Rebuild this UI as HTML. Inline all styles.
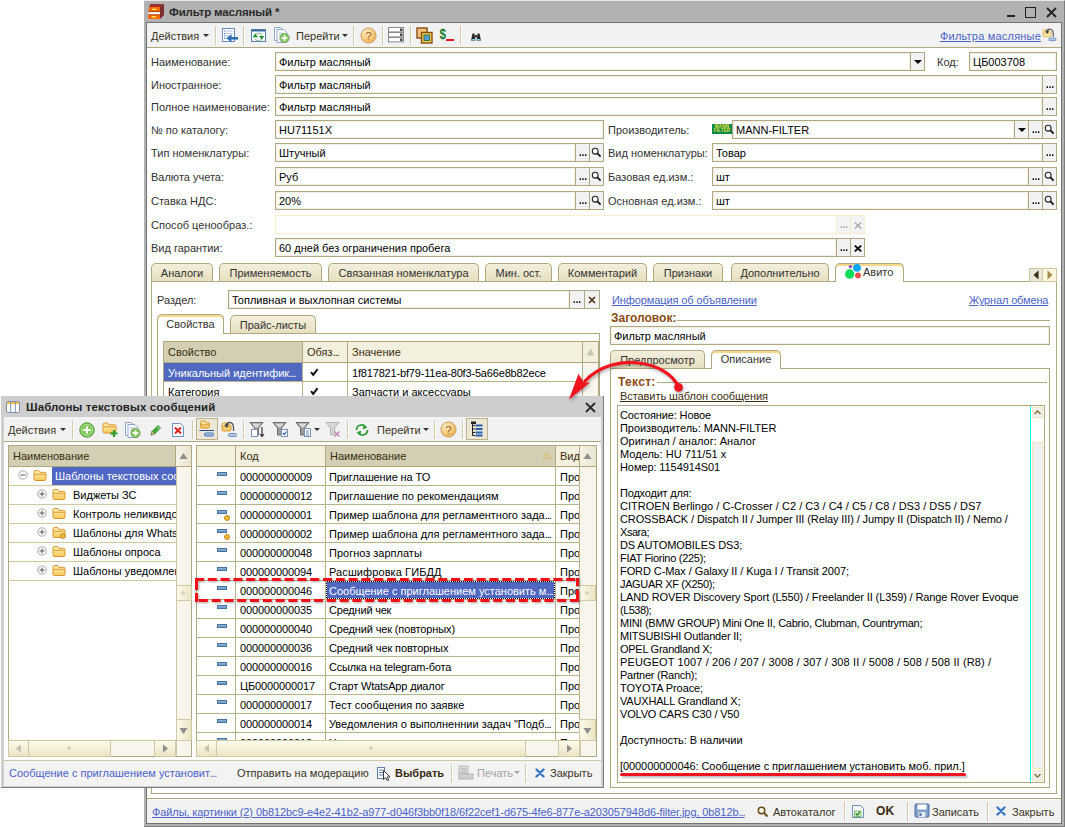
<!DOCTYPE html><html><head><meta charset="utf-8"><title>Фильтр масляный</title><style>
html,body{margin:0;padding:0}
body{width:1065px;height:827px;position:relative;overflow:hidden;background:#fff;font:11px "Liberation Sans",sans-serif;color:#222}
div,span,a{position:absolute;box-sizing:border-box;white-space:nowrap}
.t{line-height:13px;height:13px}
.in{background:#fff;border:1px solid #b0a882;height:19px;box-shadow:inset 0 0 0 1px #f4f1e4}
.in .t{left:3px;top:3px;color:#000}
.bt{background:#f2f2f2;border:1px solid #b0a882;height:19px;width:15px;text-align:center;line-height:14px;font-size:11px;color:#000}
.lnk{color:#4a62c8;text-decoration:underline}
.tab{height:18px;border:1px solid #b0a882;border-bottom:none;border-radius:5px 5px 0 0;background:linear-gradient(#f3efdc,#e6dfc0);text-align:center;line-height:19px;color:#333}
.tab.act{background:#fff;height:19px;box-shadow:inset 0 2px 0 #f7d98b;line-height:17px}
.hd{background:#f3f0de;border-right:1px solid #b0a882;border-bottom:1px solid #b0a882;height:21px;line-height:21px;padding-left:4px;color:#3a2d10;overflow:hidden}
.hd.cur{background:#d3ceb4}
.cell{background:#fff;border-right:1px solid #b9b28e;border-bottom:1px solid #b9b28e;height:19px;line-height:20px;padding-left:4px;color:#000;overflow:hidden}
.sel{background:#5068c0;color:#fff}
i{font-style:normal;letter-spacing:-1px}
.sep{width:1px;background:#d2ccae;box-shadow:1px 0 0 #fff}
</style></head><body>
<div class="" style="left:144px;top:0px;width:921px;height:827px;background:#b2b2b2;border-top:1px solid #e8e8e8;border-right:1px solid #7c7c7c;border-bottom:1px solid #7c7c7c"></div>
<div class="" style="left:146px;top:22px;width:916px;height:802px;background:#fff;border:1px solid #727272"></div>
<span class="t " style="left:169px;top:6px;font-weight:bold;color:#2a2a2a;font-size:11.5px;letter-spacing:-.15px">Фильтр масляный *</span>
<svg style="position:absolute;left:148px;top:4px" width="16" height="15" viewBox="0 0 16 15"><path d="M2.5 0H16L12 3H1Z" fill="#9c2f2a"/><path d="M16 0V11L12 15V3Z" fill="#7a2b2b"/><path d="M1 3H12V15H0Z" fill="#ff6a00"/><path d="M.6 8H12V10.5H.3Z" fill="#fff"/><path d="M.6 7.6H12M.3 10.8H12" stroke="#8a2b1a" stroke-width=".7"/><rect x="4" y="4.5" width="4.5" height="1.4" rx=".7" fill="#ffe45a"/><rect x="3.5" y="12" width="4.5" height="1.4" rx=".7" fill="#ffe45a"/></svg>
<div class="" style="left:1007px;top:15px;width:8px;height:2px;background:#222"></div>
<div class="" style="left:1025px;top:7px;width:11px;height:11px;border:1.5px solid #222"></div>
<svg style="position:absolute;left:1046px;top:7px" width="11" height="11" viewBox="0 0 11 11"><path d="M1 1L10 10M10 1L1 10" stroke="#222" stroke-width="1.8"/></svg>
<div class="" style="left:147px;top:23px;width:914px;height:25px;background:#f2f2f2;border-bottom:1px solid #b0a77f"></div>
<span class="t " style="left:151px;top:30px;color:#3a3426">Действия</span>
<svg style="position:absolute;left:203px;top:34px" width="6" height="3"><path d="M0 0H6L3 3Z" fill="#333"/></svg>
<div class="sep" style="left:215px;top:26px;width:1px;height:19px;"></div>
<span class="t " style="left:296px;top:30px;color:#3a3426">Перейти</span>
<svg style="position:absolute;left:342px;top:34px" width="6" height="3"><path d="M0 0H6L3 3Z" fill="#333"/></svg>
<div class="sep" style="left:243px;top:26px;width:1px;height:19px;"></div>
<div class="sep" style="left:353px;top:26px;width:1px;height:19px;"></div>
<div class="sep" style="left:382px;top:26px;width:1px;height:19px;"></div>
<div class="sep" style="left:410px;top:26px;width:1px;height:19px;"></div>
<div class="sep" style="left:460px;top:26px;width:1px;height:19px;"></div>
<svg style="position:absolute;left:222px;top:28px" width="17" height="15" viewBox="0 0 17 15"><rect x=".5" y=".5" width="12" height="13" fill="#fff" stroke="#6a8cc0" stroke-width="1"/><path d="M2 3.0H3.5" stroke="#3a6fd0" stroke-width="1"/><path d="M4.5 3.0H10.5" stroke="#b5bcc8" stroke-width="1"/><path d="M2 5.4H3.5" stroke="#3a6fd0" stroke-width="1"/><path d="M4.5 5.4H10.5" stroke="#b5bcc8" stroke-width="1"/><path d="M2 7.8H3.5" stroke="#3a6fd0" stroke-width="1"/><path d="M4.5 7.8H10.5" stroke="#b5bcc8" stroke-width="1"/><path d="M2 10.2H3.5" stroke="#3a6fd0" stroke-width="1"/><path d="M4.5 10.2H10.5" stroke="#b5bcc8" stroke-width="1"/><path d="M16 10.3H8" stroke="#2f6fb5" stroke-width="2.6"/><path d="M9.5 6.3V14.3L4.2 10.3Z" fill="#2f6fb5"/></svg>
<svg style="position:absolute;left:251px;top:29px" width="15" height="13" viewBox="0 0 15 13"><rect x=".5" y=".5" width="14" height="12" fill="#f2fbfd" stroke="#5f7fa8" stroke-width="1"/><rect x=".5" y=".5" width="14" height="2" fill="#3f6f9f"/><path d="M3.8 8A3.7 3.4 0 0 1 11 6.5M11.2 8A3.7 3.4 0 0 1 4 9.5" fill="none" stroke="#7fb08a" stroke-width=".9"/><path d="M1.8 8.2L4.3 4.6L6.8 8.2Z" fill="#1f8a2a"/><path d="M8 7L10.6 10.6L13.2 7Z" fill="#1f8a2a"/></svg>
<svg style="position:absolute;left:274px;top:27px" width="17" height="17" viewBox="0 0 17 17"><path d="M0.5 0.5H6.5L9.5 3.5V13.5H0.5Z" fill="#fff" stroke="#8fa6cc" stroke-width="1"/><path d="M3 2.5H10L13 5.5V15.5H3Z" fill="#fff" stroke="#8fa6cc" stroke-width="1"/><path d="M5 6H9" stroke="#b5bcc8" stroke-width="1"/><path d="M5 8H9" stroke="#b5bcc8" stroke-width="1"/><circle cx="10.5" cy="11" r="4.7" fill="#7cc653" stroke="#8aa88a" stroke-width="1"/><path d="M10.5 8.2V13.8M7.7 11H13.3" stroke="#fff" stroke-width="1.8"/></svg>
<svg style="position:absolute;left:360px;top:27px" width="17" height="17" viewBox="0 0 17 17"><defs><radialGradient id="hg" cx=".35" cy=".3" r=".8"><stop offset="0" stop-color="#fdebc4"/><stop offset=".6" stop-color="#f6c878"/><stop offset="1" stop-color="#e8a44a"/></radialGradient></defs><circle cx="8.5" cy="8.5" r="7.6" fill="url(#hg)" stroke="#c9a06a" stroke-width="1"/><text x="8.5" y="12.5" text-anchor="middle" font-family="Liberation Sans, sans-serif" font-size="11.5" fill="#9a5a1e">?</text></svg>
<svg style="position:absolute;left:388px;top:27px" width="17" height="16" viewBox="0 0 17 16"><rect x=".5" y="0.5" width="15" height="4.4" fill="#fbfbfb" stroke="#8a8a8a" stroke-width="1"/><rect x="12" y="1.5" width="2.5" height="2.5" fill="#444"/><rect x=".5" y="5.5" width="15" height="4.4" fill="#fbfbfb" stroke="#8a8a8a" stroke-width="1"/><rect x="12" y="6.5" width="2.5" height="2.5" fill="#444"/><rect x=".5" y="10.5" width="15" height="4.4" fill="#fbfbfb" stroke="#8a8a8a" stroke-width="1"/><rect x="12" y="11.5" width="2.5" height="2.5" fill="#444"/></svg>
<svg style="position:absolute;left:416px;top:27px" width="17" height="17" viewBox="0 0 17 17"><rect x="1" y="1" width="10" height="10" fill="#f0c27a" stroke="#8a4b12" stroke-width="1.4"/><rect x="5.5" y="5.5" width="10.5" height="10.5" fill="#f2d14a" stroke="#8a4b12" stroke-width="1.4"/><rect x="8" y="8" width="5.5" height="5.5" fill="#5aa0d8" stroke="#2f7a4a" stroke-width="1"/></svg>
<svg style="position:absolute;left:438px;top:27px" width="18" height="17" viewBox="0 0 18 17"><text x="1.5" y="12" font-family="Liberation Sans, sans-serif" font-size="14" font-weight="bold" fill="#0f7a2a" textLength="6.5" lengthAdjust="spacingAndGlyphs">$</text><rect x="8" y="12" width="8" height="2" fill="#ee1520"/></svg>
<svg style="position:absolute;left:470px;top:32px" width="12" height="10" viewBox="0 0 12 10"><path d="M2.5 1.5H4.5V4L5.5 8.5H1L2 4Z" fill="#222"/><path d="M7.5 1.5H9.5L10 4L11 8.5H6.5L7.5 4Z" fill="#222"/><rect x="4.5" y="3" width="3" height="2.5" fill="#333"/><path d="M1.5 7.5H5M7 7.5H10.5" stroke="#6fd0e8" stroke-width="1"/></svg>
<svg style="position:absolute;left:1042px;top:27px" width="15" height="15" viewBox="0 0 16.5 17"><defs><linearGradient id="fg" x1="0" y1="0" x2="0" y2="1"><stop offset="0" stop-color="#fdeeb4"/><stop offset="1" stop-color="#f6c95c"/></linearGradient></defs><path d="M1 4.5Q1 3 2.5 3H5.5L7 4.8H8.5Q10 4.8 10 6.3V9.5Q10 11 8.5 11H2.5Q1 11 1 9.5Z" fill="#fbe9a8" stroke="#d9b45c" stroke-width="1"/><path d="M1.5 6.8H9.5" stroke="#d9b45c" stroke-width=".9"/><path d="M5 5.5C6 1.5 12 1 12.5 7V11" fill="none" stroke="#555" stroke-width="1.3"/><path d="M3 5L7.5 3.5L6.5 8Z" fill="#444"/><rect x="7.5" y="12.5" width="8" height="3" rx="1" fill="#b7c9e2" stroke="#6f8fbf" stroke-width="1"/></svg>
<span class="t lnk" style="left:940px;top:30px;letter-spacing:.2px">Фильтра масляные</span>
<span class="t " style="left:151px;top:56px;color:#333">Наименование:</span>
<span class="t " style="left:151px;top:79px;color:#333">Иностранное:</span>
<span class="t " style="left:151px;top:101px;color:#333">Полное наименование:</span>
<span class="t " style="left:151px;top:124px;color:#333">№ по каталогу:</span>
<span class="t " style="left:151px;top:147px;color:#333">Тип номенклатуры:</span>
<span class="t " style="left:151px;top:171px;color:#333">Валюта учета:</span>
<span class="t " style="left:151px;top:195px;color:#333">Ставка НДС:</span>
<span class="t " style="left:151px;top:219px;color:#333">Способ ценообраз.:</span>
<span class="t " style="left:151px;top:242px;color:#333">Вид гарантии:</span>
<div class="in" style="left:275px;top:52px;width:636px;"><span class="t">Фильтр масляный</span></div>
<div class="bt" style="left:910px;top:52px;width:15px;"><svg width="8" height="4" viewBox="0 0 8 4" style="position:absolute;left:3px;top:7px"><path d="M0 0H8L4 4Z" fill="#000"/></svg></div>
<span class="t " style="left:937px;top:56px;color:#333">Код:</span>
<div class="in" style="left:969px;top:52px;width:88px;"><span class="t">ЦБ003708</span></div>
<div class="in" style="left:275px;top:75px;width:768px;"><span class="t">Фильтр масляный</span></div>
<div class="bt" style="left:1042px;top:75px;width:15px;"><svg width="9" height="3" viewBox="0 0 9 3" style="position:absolute;left:2.5px;top:10px"><path d="M.6 .3H2V2H.6ZM3.3 .3H4.7V2H3.3ZM6 .3H7.4V2H6Z" fill="#111"/></svg></div>
<div class="in" style="left:275px;top:97px;width:768px;"><span class="t">Фильтр масляный</span></div>
<div class="bt" style="left:1042px;top:97px;width:15px;"><svg width="9" height="3" viewBox="0 0 9 3" style="position:absolute;left:2.5px;top:10px"><path d="M.6 .3H2V2H.6ZM3.3 .3H4.7V2H3.3ZM6 .3H7.4V2H6Z" fill="#111"/></svg></div>
<div class="in" style="left:275px;top:120px;width:329px;"><span class="t">HU71151X</span></div>
<span class="t " style="left:608px;top:124px;color:#333">Производитель:</span>
<div class="" style="left:712px;top:124px;width:20px;height:10px;background:#0f8a4a;color:#e6e23a;font-size:4.5px;line-height:4.5px;font-weight:bold;text-align:center;overflow:hidden;padding-top:.5px;letter-spacing:.2px">MANN<br>FILTER</div>
<div class="in" style="left:732px;top:120px;width:283px;"><span class="t">MANN-FILTER</span></div>
<div class="bt" style="left:1014px;top:120px;width:15px;"><svg width="8" height="4" viewBox="0 0 8 4" style="position:absolute;left:3px;top:7px"><path d="M0 0H8L4 4Z" fill="#000"/></svg></div>
<div class="bt" style="left:1028px;top:120px;width:15px;"><svg width="9" height="3" viewBox="0 0 9 3" style="position:absolute;left:2.5px;top:10px"><path d="M.6 .3H2V2H.6ZM3.3 .3H4.7V2H3.3ZM6 .3H7.4V2H6Z" fill="#111"/></svg></div>
<div class="bt" style="left:1042px;top:120px;width:15px;"><svg width="11" height="11" viewBox="0 0 11 11" style="position:absolute;left:1px;top:3px"><circle cx="4.2" cy="4.2" r="2.9" fill="#fff" stroke="#222" stroke-width="1.1"/><path d="M6.4 6.4 L9.6 9.6" stroke="#111" stroke-width="1.8"/></svg></div>
<div class="in" style="left:275px;top:143px;width:301px;"><span class="t">Штучный</span></div>
<div class="bt" style="left:575px;top:143px;width:15px;"><svg width="9" height="3" viewBox="0 0 9 3" style="position:absolute;left:2.5px;top:10px"><path d="M.6 .3H2V2H.6ZM3.3 .3H4.7V2H3.3ZM6 .3H7.4V2H6Z" fill="#111"/></svg></div>
<div class="bt" style="left:589px;top:143px;width:15px;"><svg width="11" height="11" viewBox="0 0 11 11" style="position:absolute;left:1px;top:3px"><circle cx="4.2" cy="4.2" r="2.9" fill="#fff" stroke="#222" stroke-width="1.1"/><path d="M6.4 6.4 L9.6 9.6" stroke="#111" stroke-width="1.8"/></svg></div>
<span class="t " style="left:608px;top:147px;color:#333">Вид номенклатуры:</span>
<div class="in" style="left:712px;top:143px;width:331px;"><span class="t">Товар</span></div>
<div class="bt" style="left:1042px;top:143px;width:15px;"><svg width="9" height="3" viewBox="0 0 9 3" style="position:absolute;left:2.5px;top:10px"><path d="M.6 .3H2V2H.6ZM3.3 .3H4.7V2H3.3ZM6 .3H7.4V2H6Z" fill="#111"/></svg></div>
<div class="in" style="left:275px;top:167px;width:301px;"><span class="t">Руб</span></div>
<div class="bt" style="left:575px;top:167px;width:15px;"><svg width="9" height="3" viewBox="0 0 9 3" style="position:absolute;left:2.5px;top:10px"><path d="M.6 .3H2V2H.6ZM3.3 .3H4.7V2H3.3ZM6 .3H7.4V2H6Z" fill="#111"/></svg></div>
<div class="bt" style="left:589px;top:167px;width:15px;"><svg width="11" height="11" viewBox="0 0 11 11" style="position:absolute;left:1px;top:3px"><circle cx="4.2" cy="4.2" r="2.9" fill="#fff" stroke="#222" stroke-width="1.1"/><path d="M6.4 6.4 L9.6 9.6" stroke="#111" stroke-width="1.8"/></svg></div>
<span class="t " style="left:608px;top:171px;color:#333">Базовая ед.изм.:</span>
<div class="in" style="left:712px;top:167px;width:317px;"><span class="t">шт</span></div>
<div class="bt" style="left:1028px;top:167px;width:15px;"><svg width="9" height="3" viewBox="0 0 9 3" style="position:absolute;left:2.5px;top:10px"><path d="M.6 .3H2V2H.6ZM3.3 .3H4.7V2H3.3ZM6 .3H7.4V2H6Z" fill="#111"/></svg></div>
<div class="bt" style="left:1042px;top:167px;width:15px;"><svg width="11" height="11" viewBox="0 0 11 11" style="position:absolute;left:1px;top:3px"><circle cx="4.2" cy="4.2" r="2.9" fill="#fff" stroke="#222" stroke-width="1.1"/><path d="M6.4 6.4 L9.6 9.6" stroke="#111" stroke-width="1.8"/></svg></div>
<div class="in" style="left:275px;top:191px;width:301px;"><span class="t">20%</span></div>
<div class="bt" style="left:575px;top:191px;width:15px;"><svg width="9" height="3" viewBox="0 0 9 3" style="position:absolute;left:2.5px;top:10px"><path d="M.6 .3H2V2H.6ZM3.3 .3H4.7V2H3.3ZM6 .3H7.4V2H6Z" fill="#111"/></svg></div>
<div class="bt" style="left:589px;top:191px;width:15px;"><svg width="11" height="11" viewBox="0 0 11 11" style="position:absolute;left:1px;top:3px"><circle cx="4.2" cy="4.2" r="2.9" fill="#fff" stroke="#222" stroke-width="1.1"/><path d="M6.4 6.4 L9.6 9.6" stroke="#111" stroke-width="1.8"/></svg></div>
<span class="t " style="left:608px;top:195px;color:#333">Основная ед.изм.:</span>
<div class="in" style="left:712px;top:191px;width:317px;"><span class="t">шт</span></div>
<div class="bt" style="left:1028px;top:191px;width:15px;"><svg width="9" height="3" viewBox="0 0 9 3" style="position:absolute;left:2.5px;top:10px"><path d="M.6 .3H2V2H.6ZM3.3 .3H4.7V2H3.3ZM6 .3H7.4V2H6Z" fill="#111"/></svg></div>
<div class="bt" style="left:1042px;top:191px;width:15px;"><svg width="11" height="11" viewBox="0 0 11 11" style="position:absolute;left:1px;top:3px"><circle cx="4.2" cy="4.2" r="2.9" fill="#fff" stroke="#222" stroke-width="1.1"/><path d="M6.4 6.4 L9.6 9.6" stroke="#111" stroke-width="1.8"/></svg></div>
<div class="in" style="left:275px;top:215px;width:562px;border-color:#f7f0d0;box-shadow:none"><span class="t"></span></div>
<div class="bt" style="left:836px;top:215px;width:15px;border-color:#f7f0d0;background:#f3f3f3"><svg width="9" height="3" viewBox="0 0 9 3" style="position:absolute;left:2.5px;top:10px"><path d="M.6 .3H2V2H.6ZM3.3 .3H4.7V2H3.3ZM6 .3H7.4V2H6Z" fill="#aaa"/></svg></div>
<div class="bt" style="left:850px;top:215px;width:15px;border-color:#f7f0d0;background:#f3f3f3"><svg width="8" height="7" viewBox="0 0 8 7" style="position:absolute;left:3px;top:6px"><path d="M.8 .6L7.2 6.4M7.2 .6L.8 6.4" stroke="#a8a8a8" stroke-width="1.4"/></svg></div>
<div class="in" style="left:275px;top:238px;width:562px;"><span class="t">60 дней без ограничения пробега</span></div>
<div class="bt" style="left:836px;top:238px;width:15px;"><svg width="9" height="3" viewBox="0 0 9 3" style="position:absolute;left:2.5px;top:10px"><path d="M.6 .3H2V2H.6ZM3.3 .3H4.7V2H3.3ZM6 .3H7.4V2H6Z" fill="#111"/></svg></div>
<div class="bt" style="left:850px;top:238px;width:15px;"><svg width="8" height="7" viewBox="0 0 8 7" style="position:absolute;left:3px;top:6px"><path d="M.8 .6L7.2 6.4M7.2 .6L.8 6.4" stroke="#111" stroke-width="1.9"/></svg></div>
<div class="" style="left:151px;top:281px;width:906px;height:513px;border:1px solid #b0a882;background:#fff"></div>
<div class="tab" style="left:151px;top:263px;width:62px">Аналоги</div>
<div class="tab" style="left:219px;top:263px;width:103px">Применяемость</div>
<div class="tab" style="left:328px;top:263px;width:151px">Связанная номенклатура</div>
<div class="tab" style="left:485px;top:263px;width:67px">Мин. ост.</div>
<div class="tab" style="left:558px;top:263px;width:89px">Комментарий</div>
<div class="tab" style="left:653px;top:263px;width:70px">Признаки</div>
<div class="tab" style="left:731px;top:263px;width:98px">Дополнительно</div>
<div class="tab act" style="left:835px;top:263px;width:69px;padding-left:27px;text-align:left">Авито</div>
<svg style="position:absolute;left:844px;top:263px" width="18" height="17" viewBox="0 0 18 17"><circle cx="6.4" cy="3.6" r="1.7" fill="#9b45c4"/><circle cx="13" cy="4.8" r="3.9" fill="#0aa7ff"/><circle cx="5.7" cy="11" r="4.7" fill="#0adb5b"/><circle cx="14" cy="12.4" r="2.9" fill="#f14b4b"/></svg>
<div class="" style="left:1029px;top:268px;width:14px;height:14px;border:1px solid #cfc8a6;background:#e9e6da"><svg width="12" height="12" style="position:absolute;left:0;top:0"><path d="M8.5 1.5V10.5L3.5 6Z" fill="#3a2a10"/></svg></div>
<div class="" style="left:1042px;top:268px;width:15px;height:14px;border:1px solid #cfc8a6;background:#fbf7dc"><svg width="12" height="12" style="position:absolute;left:1px;top:0"><path d="M3.5 1.5V10.5L8.5 6Z" fill="#a48a4f"/></svg></div>
<span class="t " style="left:157px;top:294px;color:#333">Раздел:</span>
<div class="in" style="left:228px;top:290px;width:342px;"><span class="t">Топливная и выхлопная системы</span></div>
<div class="bt" style="left:569px;top:290px;width:16px;"><svg width="9" height="3" viewBox="0 0 9 3" style="position:absolute;left:2.5px;top:10px"><path d="M.6 .3H2V2H.6ZM3.3 .3H4.7V2H3.3ZM6 .3H7.4V2H6Z" fill="#111"/></svg></div>
<div class="bt" style="left:584px;top:290px;width:16px;"><svg width="8" height="8" viewBox="0 0 8 8" style="position:absolute;left:3px;top:5px"><path d="M1 1L7 7M7 1L1 7" stroke="#4a3312" stroke-width="1.7"/></svg></div>
<div class="" style="left:157px;top:333px;width:443px;height:450px;border:1px solid #b0a882;background:#fff"></div>
<div class="tab act" style="left:157px;top:314px;width:67px;height:20px;line-height:19px">Свойства</div>
<div class="tab" style="left:230px;top:315px;width:86px">Прайс-листы</div>
<div class="" style="left:163px;top:341px;width:436px;height:400px;border:1px solid #b0a882;background:#fff"></div>
<div class="hd cur" style="left:164px;top:342px;width:139px">Свойство</div>
<div class="hd" style="left:303px;top:342px;width:45px">Обяз<i>...</i></div>
<div class="hd" style="left:348px;top:342px;width:235px">Значение</div>
<div class="hd" style="left:583px;top:342px;width:15px;padding:0;border-right:none"><svg width="9" height="8" viewBox="0 0 9 8" style="position:absolute;left:3px;top:6px"><path d="M0.5 7.5H8.5L4.5 0.5Z" fill="#c9c6b4"/></svg></div>
<div class="cell sel" style="left:164px;top:363px;width:139px">Уникальный идентифик<i>...</i></div>
<div class="cell" style="left:303px;top:363px;width:45px;padding-left:6px"><svg width="9" height="9" viewBox="0 0 9 9" style="position:absolute;left:7px;top:5px"><path d="M1 4.2L3.2 6.8L7.6 1.2" fill="none" stroke="#111" stroke-width="2"/></svg></div>
<div class="cell" style="left:348px;top:363px;width:235px;letter-spacing:-.17px">1f817821-bf79-11ea-80f3-5a66e8b82ece</div>
<div class="cell" style="left:164px;top:382px;width:139px">Категория</div>
<div class="cell" style="left:303px;top:382px;width:45px;padding-left:6px"><svg width="9" height="9" viewBox="0 0 9 9" style="position:absolute;left:7px;top:5px"><path d="M1 4.2L3.2 6.8L7.6 1.2" fill="none" stroke="#111" stroke-width="2"/></svg></div>
<div class="cell" style="left:348px;top:382px;width:235px">Запчасти и аксессуары</div>
<div class="" style="left:583px;top:363px;width:15px;height:378px;background:#f8f6ec"></div>
<span class="t lnk" style="left:612px;top:294px;letter-spacing:-.1px">Информация об объявлении</span>
<span class="t lnk" style="left:969px;top:294px;letter-spacing:-.15px">Журнал обмена</span>
<span class="t " style="left:611px;top:312px;font-weight:bold;color:#8a4b12;font-size:12px">Заголовок:</span>
<div class="" style="left:677px;top:320px;width:373px;height:1px;background:#b0a882"></div>
<div class="in" style="left:610px;top:326px;width:440px;"><span class="t">Фильтр масляный</span></div>
<div class="" style="left:610px;top:368px;width:440px;height:420px;border:1px solid #b0a882;background:#fff"></div>
<div class="tab" style="left:610px;top:350px;width:95px">Предпросмотр</div>
<div class="tab act" style="left:711px;top:350px;width:70px">Описание</div>
<span class="t " style="left:618px;top:376px;font-weight:bold;color:#8a4b12;font-size:12px;letter-spacing:.3px">Текст:</span>
<div class="" style="left:657px;top:382px;width:390px;height:1px;background:#b0a882"></div>
<span class="t " style="left:620px;top:390px;color:#3a2d10;text-decoration:underline;letter-spacing:-.07px">Вставить шаблон сообщения</span>
<div class="" style="left:617px;top:405px;width:428px;height:378px;border:1px solid #b0a882;background:#fff"></div>
<span class="t " style="left:620px;top:409px;color:#000;letter-spacing:-0.127px">Состояние: Новое</span>
<span class="t " style="left:620px;top:422px;color:#000;letter-spacing:-0.048px">Производитель: MANN-FILTER</span>
<span class="t " style="left:620px;top:435px;color:#000;letter-spacing:-0.004px">Оригинал / аналог: Аналог</span>
<span class="t " style="left:620px;top:448px;color:#000;letter-spacing:0.017px">Модель: HU 711/51 x</span>
<span class="t " style="left:620px;top:461px;color:#000;letter-spacing:-0.087px">Номер: 1154914S01</span>
<span class="t " style="left:620px;top:487px;color:#000;letter-spacing:-0.200px">Подходит для:</span>
<span class="t " style="left:620px;top:500px;color:#000;letter-spacing:0.020px">CITROEN Berlingo / C-Crosser / C2 / C3 / C4 / C5 / C8 / DS3 / DS5 / DS7</span>
<span class="t " style="left:620px;top:513px;color:#000;letter-spacing:-0.110px">CROSSBACK / Dispatch II / Jumper III (Relay III) / Jumpy II (Dispatch II) / Nemo /</span>
<span class="t " style="left:620px;top:526px;color:#000;letter-spacing:-0.460px">Xsara;</span>
<span class="t " style="left:620px;top:539px;color:#000;letter-spacing:-0.128px">DS AUTOMOBILES DS3;</span>
<span class="t " style="left:620px;top:552px;color:#000;letter-spacing:-0.289px">FIAT Fiorino (225);</span>
<span class="t " style="left:620px;top:565px;color:#000;letter-spacing:-0.085px">FORD C-Max / Galaxy II / Kuga I / Transit 2007;</span>
<span class="t " style="left:620px;top:578px;color:#000;letter-spacing:-0.356px">JAGUAR XF (X250);</span>
<span class="t " style="left:620px;top:591px;color:#000;letter-spacing:-0.121px">LAND ROVER Discovery Sport (L550) / Freelander II (L359) / Range Rover Evoque</span>
<span class="t " style="left:620px;top:604px;color:#000;letter-spacing:-0.533px">(L538);</span>
<span class="t " style="left:620px;top:617px;color:#000;letter-spacing:-0.270px">MINI (BMW GROUP) Mini One II, Cabrio, Clubman, Countryman;</span>
<span class="t " style="left:620px;top:630px;color:#000;letter-spacing:-0.196px">MITSUBISHI Outlander II;</span>
<span class="t " style="left:620px;top:643px;color:#000;letter-spacing:-0.275px">OPEL Grandland X;</span>
<span class="t " style="left:620px;top:656px;color:#000;letter-spacing:0.116px">PEUGEOT 1007 / 206 / 207 / 3008 / 307 / 308 II / 5008 / 508 / 508 II (R8) /</span>
<span class="t " style="left:620px;top:669px;color:#000;letter-spacing:-0.267px">Partner (Ranch);</span>
<span class="t " style="left:620px;top:682px;color:#000;letter-spacing:-0.115px">TOYOTA Proace;</span>
<span class="t " style="left:620px;top:695px;color:#000;letter-spacing:-0.180px">VAUXHALL Grandland X;</span>
<span class="t " style="left:620px;top:708px;color:#000;letter-spacing:-0.174px">VOLVO CARS C30 / V50</span>
<span class="t " style="left:620px;top:734px;color:#000;letter-spacing:-0.048px">Доступность: В наличии</span>
<span class="t " style="left:620px;top:760px;color:#000;letter-spacing:-0.074px">[000000000046: Сообщение с приглашением установить моб. прил.]</span>
<div class="" style="left:620px;top:773px;width:346px;height:3px;background:#ee1520;border-radius:1.5px;box-shadow:2px 2px 2px rgba(0,0,0,.25)"></div>
<div class="" style="left:1030px;top:406px;width:14px;height:376px;background:#fff;border-left:1px solid #0ff"></div>
<div class="" style="left:1032px;top:407px;width:11px;height:11px;background:#f0f0f3;border:1px solid #efe6c0"><svg width="9" height="9" style="position:absolute;left:0;top:0" viewBox="0 0 9 9"><path d="M1.5 6L4.5 3L7.5 6" fill="none" stroke="#8a7a45" stroke-width="1.6"/></svg></div>
<div class="" style="left:1032px;top:770px;width:11px;height:11px;background:#f0f0f3;border:1px solid #efe6c0"><svg width="9" height="9" style="position:absolute;left:0;top:0" viewBox="0 0 9 9"><path d="M1.5 3L4.5 6L7.5 3" fill="none" stroke="#8a7a45" stroke-width="1.6"/></svg></div>
<div class="" style="left:1032px;top:442px;width:11px;height:327px;background:#f0f0f3;border:1px solid #efe6c0"></div>
<div class="" style="left:147px;top:798px;width:914px;height:25px;background:#f2f2f2;border-top:1px solid #b0a77f;box-shadow:inset 0 1px 0 #fafafa"></div>
<span class="t lnk" style="left:152px;top:806px;letter-spacing:-.1px">Файлы, картинки (2) 0b812bc9-e4e2-41b2-a977-d046f3bb0f18/6f22cef1-d675-4fe6-877e-a203057948d6-filter.jpg, 0b812b<i>...</i></span>
<svg style="position:absolute;left:757px;top:806px" width="12" height="12" viewBox="0 0 12 12"><circle cx="4.5" cy="4.5" r="3.2" fill="#fff" stroke="#6b4a1a" stroke-width="1.5"/><path d="M7 7L10.5 10.5" stroke="#6b4a1a" stroke-width="2"/></svg>
<span class="t " style="left:773px;top:806px;color:#3a3426">Автокаталог</span>
<div class="sep" style="left:844px;top:802px;width:1px;height:19px;"></div>
<svg style="position:absolute;left:851px;top:804px" width="14" height="15" viewBox="0 0 14 15"><path d="M1.5 1.5H9.5L12.5 4.5V13.5H1.5Z" fill="#fff" stroke="#6f8fbf" stroke-width="1"/><rect x="3.5" y="7" width="6.5" height="5.5" fill="#d8f0d0" stroke="#5fae4a" stroke-width=".8"/><path d="M4.8 9.5L6.3 11.2L9 7.8" fill="none" stroke="#2f8a2a" stroke-width="1.4"/></svg>
<span class="t " style="left:876px;top:805px;font-weight:bold;font-size:12px;color:#3a2a10;letter-spacing:.2px">OK</span>
<div class="sep" style="left:907px;top:802px;width:1px;height:19px;"></div>
<svg style="position:absolute;left:914px;top:803px" width="16" height="15" viewBox="0 0 16 15"><rect x="1" y="1" width="14" height="13" rx="1" fill="#7f9fc8" stroke="#4d6f9f" stroke-width="1"/><rect x="3.5" y="1.5" width="9" height="5" fill="#fff"/><rect x="4.5" y="9" width="7" height="5" fill="#e6ecf5"/><rect x="5.5" y="10" width="2" height="3" fill="#4d6f9f"/></svg>
<span class="t " style="left:932px;top:806px;color:#3a3426">Записать</span>
<div class="sep" style="left:987px;top:802px;width:1px;height:19px;"></div>
<svg style="position:absolute;left:996px;top:806px" width="10" height="10" viewBox="0 0 10 10"><path d="M1.5 1.5L8.5 8.5M8.5 1.5L1.5 8.5" stroke="#3a78c2" stroke-width="2.4" stroke-linecap="round"/></svg>
<span class="t " style="left:1012px;top:806px;color:#3a3426">Закрыть</span>
<div class="" style="left:1px;top:396px;width:603px;height:392px;background:#cecece;border-right:1px solid #7d7d7d;border-bottom:1px solid #7d7d7d"></div>
<div class="" style="left:4px;top:417px;width:597px;height:369px;background:#fff"></div>
<span class="t " style="left:26px;top:401px;font-weight:bold;color:#222;font-size:11.5px;letter-spacing:.1px">Шаблоны текстовых сообщений</span>
<svg style="position:absolute;left:6px;top:401px" width="14" height="12" viewBox="0 0 14 12"><rect x=".5" y=".5" width="13" height="11" rx="1" fill="#fff" stroke="#7d8fae" stroke-width="1"/><rect x="1" y="1" width="12" height="2.2" fill="#f5c84a"/><path d="M4.7 .5V11.5M9.3 .5V11.5" stroke="#7d8fae" stroke-width="1"/></svg>
<svg style="position:absolute;left:585px;top:402px" width="11" height="11" viewBox="0 0 11 11"><path d="M1 1L10 10M10 1L1 10" stroke="#2a2a2a" stroke-width="1.8"/></svg>
<div class="" style="left:4px;top:417px;width:597px;height:25px;background:#f2f2f2;border-bottom:1px solid #b0a77f"></div>
<span class="t " style="left:8px;top:424px;color:#3a3426">Действия</span>
<svg style="position:absolute;left:60px;top:428px" width="6" height="3"><path d="M0 0H6L3 3Z" fill="#333"/></svg>
<div class="sep" style="left:72px;top:420px;width:1px;height:19px;"></div>
<svg style="position:absolute;left:79px;top:422px" width="16" height="16" viewBox="0 0 16 16"><circle cx="8" cy="8" r="7.2" fill="#7cc653" stroke="#4e9a36" stroke-width="1"/><circle cx="8" cy="8" r="5.6" fill="none" stroke="#b4e39a" stroke-width="1"/><path d="M8 4.2V11.8M4.2 8H11.8" stroke="#fff" stroke-width="2.2"/></svg>
<svg style="position:absolute;left:102px;top:422px" width="17" height="16" viewBox="0 0 17 16"><defs><linearGradient id="fg" x1="0" y1="0" x2="0" y2="1"><stop offset="0" stop-color="#fdeeb4"/><stop offset="1" stop-color="#f6c95c"/></linearGradient></defs><path d="M1 2.5Q1 1 2.5 1H5.5L7 2.8H12.5Q14 2.8 14 4.3V9.5Q14 11 12.5 11H2.5Q1 11 1 9.5Z" fill="url(#fg)" stroke="#d9952b" stroke-width="1"/><path d="M1.5 4.8H13.5" stroke="#d9952b" stroke-width=".9"/><path d="M12 8V15M8.5 11.5H15.5" stroke="#2f9a2f" stroke-width="2.2"/></svg>
<svg style="position:absolute;left:125px;top:422px" width="17" height="17" viewBox="0 0 17 17"><path d="M0.5 0.5H6.5L9.5 3.5V13.5H0.5Z" fill="#fff" stroke="#8fa6cc" stroke-width="1"/><path d="M3 2.5H10L13 5.5V15.5H3Z" fill="#fff" stroke="#8fa6cc" stroke-width="1"/><path d="M5 6H9" stroke="#b5bcc8" stroke-width="1"/><path d="M5 8H9" stroke="#b5bcc8" stroke-width="1"/><circle cx="10.5" cy="11" r="4.7" fill="#7cc653" stroke="#8aa88a" stroke-width="1"/><path d="M10.5 8.2V13.8M7.7 11H13.3" stroke="#fff" stroke-width="1.8"/></svg>
<svg style="position:absolute;left:149px;top:423px" width="13" height="14" viewBox="0 0 13 14"><path d="M2 12L3 8.5L9 2.5L11.5 5L5.5 11Z" fill="#3faa3a" stroke="#2b7d2a" stroke-width=".8"/><path d="M2 12L3 8.5L5.5 11Z" fill="#f4e6c0" stroke="#6b5a2a" stroke-width=".5"/><path d="M8 3.5L10.5 6" stroke="#c9f0b8" stroke-width="1"/></svg>
<svg style="position:absolute;left:171px;top:422px" width="14" height="16" viewBox="0 0 14 16"><path d="M1.5 1.5H9.5L12.5 4.5V14.5H1.5Z" fill="#fff" stroke="#6f8fbf" stroke-width="1"/><path d="M4 5.5L10 11.5M10 5.5L4 11.5" stroke="#e02020" stroke-width="2"/></svg>
<div class="sep" style="left:192px;top:420px;width:1px;height:19px;"></div>
<div style="left:196px;top:418px;width:22px;height:22px;background:#ece7d6;border:1px solid #bdb38a"></div><svg style="position:absolute;left:199px;top:420px" width="16" height="18" viewBox="0 0 16 18"><defs><linearGradient id="fg" x1="0" y1="0" x2="0" y2="1"><stop offset="0" stop-color="#fdeeb4"/><stop offset="1" stop-color="#f6c95c"/></linearGradient></defs><path d="M1.5 2.5Q1.5 1 3.0 1H6.0L7.5 2.8H9.0Q10.5 2.8 10.5 4.3V6.5Q10.5 8 9.0 8H3.0Q1.5 8 1.5 6.5Z" fill="url(#fg)" stroke="#d9952b" stroke-width="1"/><path d="M2.0 4.8H10.0" stroke="#d9952b" stroke-width=".9"/><path d="M.5 10.5H15" stroke="#2a4f8f" stroke-width="1"/><rect x="5.5" y="13" width="9" height="3" rx="1" fill="#9fc0e6" stroke="#4d79b3" stroke-width="1"/></svg>
<svg style="position:absolute;left:221px;top:420px" width="16" height="18" viewBox="0 0 16 18"><defs><linearGradient id="fg" x1="0" y1="0" x2="0" y2="1"><stop offset="0" stop-color="#fdeeb4"/><stop offset="1" stop-color="#f6c95c"/></linearGradient></defs><path d="M1 4.5Q1 3 2.5 3H5.5L7 4.8H8.5Q10 4.8 10 6.3V9.5Q10 11 8.5 11H2.5Q1 11 1 9.5Z" fill="url(#fg)" stroke="#d9952b" stroke-width="1"/><path d="M1.5 6.8H9.5" stroke="#d9952b" stroke-width=".9"/><path d="M5 5.5C6 1.5 12 1 12.5 7V11" fill="none" stroke="#555" stroke-width="1.3"/><path d="M3 5L7.5 3.5L6.5 8Z" fill="#444"/><rect x="7.5" y="13.5" width="8" height="3" rx="1" fill="#b7c9e2" stroke="#6f8fbf" stroke-width="1"/></svg>
<div class="sep" style="left:243px;top:420px;width:1px;height:19px;"></div>
<svg style="position:absolute;left:249px;top:421px" width="18" height="17" viewBox="0 0 18 17"><path d="M1 1.5H14L9.5 7V14H5.5V7Z" fill="#9b9b9b" stroke="#6e6e6e" stroke-width="1"/><path d="M3 2.5H12L8.5 6.5H6.5Z" fill="#d9d9d9"/><rect x="2.5" y="8.5" width="6" height="7" fill="#fff" stroke="#7d93b3" stroke-width="1"/><path d="M13 6V15M11 13L13 15.5L15 13" fill="none" stroke="#333" stroke-width="1.2"/></svg>
<svg style="position:absolute;left:272px;top:421px" width="18" height="17" viewBox="0 0 18 17"><path d="M1 1.5H14L9.5 7V14H5.5V7Z" fill="#9b9b9b" stroke="#6e6e6e" stroke-width="1"/><path d="M3 2.5H12L8.5 6.5H6.5Z" fill="#d9d9d9"/><rect x="9.5" y="8.5" width="6" height="7" fill="#fff" stroke="#7d93b3" stroke-width="1"/><path d="M11 12L12.3 13.5L14.5 10.5" fill="none" stroke="#2a5db0" stroke-width="1.2"/></svg>
<svg style="position:absolute;left:295px;top:421px" width="18" height="17" viewBox="0 0 18 17"><path d="M1 1.5H14L9.5 7V14H5.5V7Z" fill="#9b9b9b" stroke="#6e6e6e" stroke-width="1"/><path d="M3 2.5H12L8.5 6.5H6.5Z" fill="#d9d9d9"/><rect x="9.5" y="7.5" width="6" height="8" fill="#fff" stroke="#7d93b3" stroke-width="1"/><path d="M11 10H14" stroke="#6f8fbf" stroke-width="1"/><path d="M11 12H14" stroke="#6f8fbf" stroke-width="1"/><path d="M11 14H14" stroke="#6f8fbf" stroke-width="1"/></svg>
<svg style="position:absolute;left:314px;top:428px" width="6" height="3"><path d="M0 0H6L3 3Z" fill="#333"/></svg>
<svg style="position:absolute;left:325px;top:421px" width="18" height="17" viewBox="0 0 18 17"><path d="M1 1.5H14L9.5 7V14H5.5V7Z" fill="#d4d4d4" stroke="#b5b5b5" stroke-width="1"/><path d="M3 2.5H12L8.5 6.5H6.5Z" fill="#d9d9d9"/><path d="M9.5 10.5L14.5 15.5M14.5 10.5L9.5 15.5" stroke="#c58ab8" stroke-width="1.6"/></svg>
<div class="sep" style="left:347px;top:420px;width:1px;height:19px;"></div>
<svg style="position:absolute;left:354px;top:423px" width="16" height="14" viewBox="0 0 16 14"><path d="M2.5 7A5 5 0 0 1 11.5 4" fill="none" stroke="#2f9a3a" stroke-width="1.8"/><path d="M9.5 1.5L13.5 4.5L9 6.5Z" fill="#2f9a3a"/><path d="M13.5 7A5 5 0 0 1 4.5 10" fill="none" stroke="#2f9a3a" stroke-width="1.8"/><path d="M6.5 12.5L2.5 9.5L7 7.5Z" fill="#2f9a3a"/></svg>
<span class="t " style="left:377px;top:424px;color:#3a3426">Перейти</span>
<svg style="position:absolute;left:423px;top:428px" width="6" height="3"><path d="M0 0H6L3 3Z" fill="#333"/></svg>
<div class="sep" style="left:434px;top:420px;width:1px;height:19px;"></div>
<svg style="position:absolute;left:440px;top:421px" width="17" height="17" viewBox="0 0 17 17"><defs><radialGradient id="hg" cx=".35" cy=".3" r=".8"><stop offset="0" stop-color="#fdebc4"/><stop offset=".6" stop-color="#f6c878"/><stop offset="1" stop-color="#e8a44a"/></radialGradient></defs><circle cx="8.5" cy="8.5" r="7.6" fill="url(#hg)" stroke="#c9a06a" stroke-width="1"/><text x="8.5" y="12.5" text-anchor="middle" font-family="Liberation Sans, sans-serif" font-size="11.5" fill="#9a5a1e">?</text></svg>
<div class="sep" style="left:462px;top:420px;width:1px;height:19px;"></div>
<div style="left:466px;top:418px;width:22px;height:22px;background:#ece7d6;border:1px solid #bdb38a"></div><svg style="position:absolute;left:470px;top:421px" width="14" height="16" viewBox="0 0 14 16"><path d="M2.5 1V14.5M2.5 4.5H5M2.5 8H5M2.5 11.5H5M2.5 14.5H5" stroke="#222" stroke-width="1" fill="none"/><rect x="1" y="0.5" width="5" height="2.5" fill="#222"/><rect x="5.5" y="3.5" width="7" height="2" fill="#2a5db0"/><rect x="5.5" y="7" width="7" height="2" fill="#2a5db0"/><rect x="5.5" y="10.5" width="7" height="2" fill="#2a5db0"/><rect x="5.5" y="13.5" width="7" height="2" fill="#2a5db0"/></svg>
<div class="" style="left:8px;top:445px;width:184px;height:312px;border:1px solid #b0a882;background:#fff"></div>
<div class="hd cur" style="left:9px;top:446px;width:167px;height:21px;line-height:21px">Наименование</div>
<div class="hd" style="left:176px;top:446px;width:15px;height:21px;padding:0;border-right:none;background:linear-gradient(90deg,#f6f3e6,#e9e5d0)"></div>
<svg style="position:absolute;left:179px;top:452px" width="9" height="8"><path d="M0.5 7H8.5L4.5 1Z" fill="#8e8e8e"/></svg>
<div class="" style="left:9px;top:467px;width:167px;height:19px;border-bottom:1px solid #cfc8a6;background:#fff"></div>
<div class="" style="left:52px;top:467px;width:124px;height:18px;background:#4f66c3;overflow:hidden"><span class="t" style="left:3px;top:3px;color:#fff">Шаблоны текстовых сообщений</span></div>
<svg style="position:absolute;left:33px;top:470px" width="15" height="12" viewBox="0 0 15 12"><defs><linearGradient id="fg" x1="0" y1="0" x2="0" y2="1"><stop offset="0" stop-color="#fdeeb4"/><stop offset="1" stop-color="#f6c95c"/></linearGradient></defs><path d="M1 2.0Q1 0.5 2.5 0.5H5.5L7 2.3H11.5Q13 2.3 13 3.8V9.0Q13 10.5 11.5 10.5H2.5Q1 10.5 1 9.0Z" fill="url(#fg)" stroke="#d9952b" stroke-width="1"/><path d="M1.5 4.3H12.5" stroke="#d9952b" stroke-width=".9"/></svg>
<svg style="position:absolute;left:17.5px;top:470px" width="10" height="10" viewBox="0 0 10 10"><circle cx="5" cy="5" r="4.2" fill="#fff" stroke="#a0a0a0" stroke-width="0.9"/><path d="M2.5 5H7.5" stroke="#555" stroke-width="1"/></svg>
<div class="" style="left:9px;top:486px;width:167px;height:19px;border-bottom:1px solid #cfc8a6;background:#fff"></div>
<div class="" style="left:71px;top:486px;width:105px;height:18px;overflow:hidden"><span class="t" style="left:2px;top:3px;color:#000">Виджеты ЗС</span></div>
<svg style="position:absolute;left:52px;top:489px" width="15" height="12" viewBox="0 0 15 12"><defs><linearGradient id="fg" x1="0" y1="0" x2="0" y2="1"><stop offset="0" stop-color="#fdeeb4"/><stop offset="1" stop-color="#f6c95c"/></linearGradient></defs><path d="M1 2.0Q1 0.5 2.5 0.5H5.5L7 2.3H11.5Q13 2.3 13 3.8V9.0Q13 10.5 11.5 10.5H2.5Q1 10.5 1 9.0Z" fill="url(#fg)" stroke="#d9952b" stroke-width="1"/><path d="M1.5 4.3H12.5" stroke="#d9952b" stroke-width=".9"/></svg>
<svg style="position:absolute;left:36.5px;top:489px" width="10" height="10" viewBox="0 0 10 10"><circle cx="5" cy="5" r="4.2" fill="#fff" stroke="#a0a0a0" stroke-width="0.9"/><path d="M2.5 5H7.5" stroke="#555" stroke-width="1"/><path d="M5 2.5V7.5" stroke="#555" stroke-width="1"/></svg>
<div class="" style="left:9px;top:505px;width:167px;height:19px;border-bottom:1px solid #cfc8a6;background:#fff"></div>
<div class="" style="left:71px;top:505px;width:105px;height:18px;overflow:hidden"><span class="t" style="left:2px;top:3px;color:#000">Контроль неликвидов</span></div>
<svg style="position:absolute;left:52px;top:508px" width="15" height="12" viewBox="0 0 15 12"><defs><linearGradient id="fg" x1="0" y1="0" x2="0" y2="1"><stop offset="0" stop-color="#fdeeb4"/><stop offset="1" stop-color="#f6c95c"/></linearGradient></defs><path d="M1 2.0Q1 0.5 2.5 0.5H5.5L7 2.3H11.5Q13 2.3 13 3.8V9.0Q13 10.5 11.5 10.5H2.5Q1 10.5 1 9.0Z" fill="url(#fg)" stroke="#d9952b" stroke-width="1"/><path d="M1.5 4.3H12.5" stroke="#d9952b" stroke-width=".9"/></svg>
<svg style="position:absolute;left:36.5px;top:508px" width="10" height="10" viewBox="0 0 10 10"><circle cx="5" cy="5" r="4.2" fill="#fff" stroke="#a0a0a0" stroke-width="0.9"/><path d="M2.5 5H7.5" stroke="#555" stroke-width="1"/><path d="M5 2.5V7.5" stroke="#555" stroke-width="1"/></svg>
<div class="" style="left:9px;top:524px;width:167px;height:19px;border-bottom:1px solid #cfc8a6;background:#fff"></div>
<div class="" style="left:71px;top:524px;width:105px;height:18px;overflow:hidden"><span class="t" style="left:2px;top:3px;color:#000">Шаблоны для WhatsApp</span></div>
<svg style="position:absolute;left:52px;top:527px" width="15" height="12" viewBox="0 0 15 12"><defs><linearGradient id="fg" x1="0" y1="0" x2="0" y2="1"><stop offset="0" stop-color="#fdeeb4"/><stop offset="1" stop-color="#f6c95c"/></linearGradient></defs><path d="M1 2.0Q1 0.5 2.5 0.5H5.5L7 2.3H11.5Q13 2.3 13 3.8V9.0Q13 10.5 11.5 10.5H2.5Q1 10.5 1 9.0Z" fill="url(#fg)" stroke="#d9952b" stroke-width="1"/><path d="M1.5 4.3H12.5" stroke="#d9952b" stroke-width=".9"/></svg>
<svg style="position:absolute;left:60px;top:533px" width="6" height="6" viewBox="0 0 6 6"><circle cx="3" cy="3" r="2.4" fill="#f5c13a" stroke="#a87a1a" stroke-width=".8"/></svg>
<svg style="position:absolute;left:36.5px;top:527px" width="10" height="10" viewBox="0 0 10 10"><circle cx="5" cy="5" r="4.2" fill="#fff" stroke="#a0a0a0" stroke-width="0.9"/><path d="M2.5 5H7.5" stroke="#555" stroke-width="1"/><path d="M5 2.5V7.5" stroke="#555" stroke-width="1"/></svg>
<div class="" style="left:9px;top:543px;width:167px;height:19px;border-bottom:1px solid #cfc8a6;background:#fff"></div>
<div class="" style="left:71px;top:543px;width:105px;height:18px;overflow:hidden"><span class="t" style="left:2px;top:3px;color:#000">Шаблоны опроса</span></div>
<svg style="position:absolute;left:52px;top:546px" width="15" height="12" viewBox="0 0 15 12"><defs><linearGradient id="fg" x1="0" y1="0" x2="0" y2="1"><stop offset="0" stop-color="#fdeeb4"/><stop offset="1" stop-color="#f6c95c"/></linearGradient></defs><path d="M1 2.0Q1 0.5 2.5 0.5H5.5L7 2.3H11.5Q13 2.3 13 3.8V9.0Q13 10.5 11.5 10.5H2.5Q1 10.5 1 9.0Z" fill="url(#fg)" stroke="#d9952b" stroke-width="1"/><path d="M1.5 4.3H12.5" stroke="#d9952b" stroke-width=".9"/></svg>
<svg style="position:absolute;left:36.5px;top:546px" width="10" height="10" viewBox="0 0 10 10"><circle cx="5" cy="5" r="4.2" fill="#fff" stroke="#a0a0a0" stroke-width="0.9"/><path d="M2.5 5H7.5" stroke="#555" stroke-width="1"/><path d="M5 2.5V7.5" stroke="#555" stroke-width="1"/></svg>
<div class="" style="left:9px;top:562px;width:167px;height:19px;border-bottom:1px solid #cfc8a6;background:#fff"></div>
<div class="" style="left:71px;top:562px;width:105px;height:18px;overflow:hidden"><span class="t" style="left:2px;top:3px;color:#000">Шаблоны уведомлений</span></div>
<svg style="position:absolute;left:52px;top:565px" width="15" height="12" viewBox="0 0 15 12"><defs><linearGradient id="fg" x1="0" y1="0" x2="0" y2="1"><stop offset="0" stop-color="#fdeeb4"/><stop offset="1" stop-color="#f6c95c"/></linearGradient></defs><path d="M1 2.0Q1 0.5 2.5 0.5H5.5L7 2.3H11.5Q13 2.3 13 3.8V9.0Q13 10.5 11.5 10.5H2.5Q1 10.5 1 9.0Z" fill="url(#fg)" stroke="#d9952b" stroke-width="1"/><path d="M1.5 4.3H12.5" stroke="#d9952b" stroke-width=".9"/></svg>
<svg style="position:absolute;left:36.5px;top:565px" width="10" height="10" viewBox="0 0 10 10"><circle cx="5" cy="5" r="4.2" fill="#fff" stroke="#a0a0a0" stroke-width="0.9"/><path d="M2.5 5H7.5" stroke="#555" stroke-width="1"/><path d="M5 2.5V7.5" stroke="#555" stroke-width="1"/></svg>
<div class="" style="left:176px;top:467px;width:15px;height:273px;background:#f8f6ec;border-left:1px solid #cfc8a6"></div>
<div class="" style="left:176px;top:585px;width:16px;height:16px;background:linear-gradient(90deg,#fcfaec,#ebe5c4);border:1px solid #cfc8a6"></div>
<svg style="position:absolute;left:181px;top:591px" width="4" height="4" viewBox="0 0 4 4"><circle cx="2" cy="2" r="1.3" fill="none" stroke="#bdb89c" stroke-width=".8"/></svg>
<div class="" style="left:176px;top:719px;width:16px;height:22px;background:linear-gradient(90deg,#fcfaec,#ebe5c4);border:1px solid #cfc8a6"></div>
<svg style="position:absolute;left:179px;top:727px" width="9" height="8"><path d="M0.5 1H8.5L4.5 7Z" fill="#8e8e8e"/></svg>
<div class="" style="left:9px;top:740px;width:167px;height:16px;background:#f8f6ec;border-top:1px solid #cfc8a6"></div>
<div class="" style="left:8px;top:740px;width:21px;height:17px;background:linear-gradient(#fcfaec,#ebe5c4);border:1px solid #cfc8a6"></div>
<svg style="position:absolute;left:15px;top:744px" width="7" height="9"><path d="M6 0.5V8.5L1 4.5Z" fill="#c4c1ae"/></svg>
<div class="" style="left:28px;top:740px;width:83px;height:17px;background:linear-gradient(#fcfaec,#ebe5c4);border:1px solid #cfc8a6"></div>
<svg style="position:absolute;left:67px;top:746px" width="4" height="4" viewBox="0 0 4 4"><circle cx="2" cy="2" r="1.3" fill="none" stroke="#bdb89c" stroke-width=".8"/></svg>
<div class="" style="left:154px;top:740px;width:22px;height:17px;background:linear-gradient(#fcfaec,#ebe5c4);border:1px solid #cfc8a6"></div>
<svg style="position:absolute;left:162px;top:744px" width="7" height="9"><path d="M1 0.5V8.5L6 4.5Z" fill="#8e8e8e"/></svg>
<div class="" style="left:176px;top:741px;width:15px;height:15px;background:#f8f6ec;border-left:1px solid #cfc8a6"></div>
<div class="" style="left:196px;top:445px;width:401px;height:312px;border:1px solid #b0a882;background:#fff"></div>
<div class="hd" style="left:197px;top:446px;width:39px;height:21px;line-height:21px;"></div>
<div class="hd" style="left:236px;top:446px;width:90px;height:21px;line-height:21px;">Код</div>
<div class="hd cur" style="left:326px;top:446px;width:230px;height:21px;line-height:21px;padding-left:4px">Наименование</div>
<svg style="position:absolute;left:541px;top:452px" width="11" height="8" viewBox="0 0 11 8"><path d="M4 1H7M2.5 3.5H8.5M1 6H10" stroke="#d9c27a" stroke-width="1.6"/></svg>
<div class="hd" style="left:556px;top:446px;width:24px;height:21px;line-height:21px;padding-left:4px">Вид</div>
<div class="hd" style="left:580px;top:446px;width:16px;height:21px;line-height:21px;padding:0;border-right:none;background:linear-gradient(90deg,#f6f3e6,#e9e5d0)"></div>
<svg style="position:absolute;left:583px;top:452px" width="9" height="8"><path d="M0.5 7H8.5L4.5 1Z" fill="#8e8e8e"/></svg>
<div class="cell" style="left:197px;top:467px;width:39px;"><span style="left:20px;top:5px;width:10px;height:4px;background:linear-gradient(#8fb6da,#6a98c4);border:1px solid #44739f"></span></div>
<div class="cell" style="left:236px;top:467px;width:90px;letter-spacing:-.12px">000000000009</div>
<div class="cell" style="left:326px;top:467px;width:230px;letter-spacing:-0.10px;padding-left:3px">Приглашение на ТО</div>
<div class="cell" style="left:556px;top:467px;width:24px;">Про</div>
<div class="cell" style="left:197px;top:486px;width:39px;"><span style="left:20px;top:5px;width:10px;height:4px;background:linear-gradient(#8fb6da,#6a98c4);border:1px solid #44739f"></span></div>
<div class="cell" style="left:236px;top:486px;width:90px;letter-spacing:-.12px">000000000012</div>
<div class="cell" style="left:326px;top:486px;width:230px;padding-left:3px">Приглашение по рекомендациям</div>
<div class="cell" style="left:556px;top:486px;width:24px;">Про</div>
<div class="cell" style="left:197px;top:505px;width:39px;"><span style="left:20px;top:5px;width:10px;height:4px;background:linear-gradient(#8fb6da,#6a98c4);border:1px solid #44739f"></span><span style="left:27px;top:10px;width:6px;height:6px;border-radius:3px;background:#f2b830;border:1px solid #c08a20"></span></div>
<div class="cell" style="left:236px;top:505px;width:90px;letter-spacing:-.12px">000000000001</div>
<div class="cell" style="left:326px;top:505px;width:230px;padding-left:3px">Пример шаблона для регламентного зада<i>...</i></div>
<div class="cell" style="left:556px;top:505px;width:24px;">Про</div>
<div class="cell" style="left:197px;top:524px;width:39px;"><span style="left:20px;top:5px;width:10px;height:4px;background:linear-gradient(#8fb6da,#6a98c4);border:1px solid #44739f"></span><span style="left:27px;top:10px;width:6px;height:6px;border-radius:3px;background:#f2b830;border:1px solid #c08a20"></span></div>
<div class="cell" style="left:236px;top:524px;width:90px;letter-spacing:-.12px">000000000002</div>
<div class="cell" style="left:326px;top:524px;width:230px;padding-left:3px">Пример шаблона для регламентного зада<i>...</i></div>
<div class="cell" style="left:556px;top:524px;width:24px;">Про</div>
<div class="cell" style="left:197px;top:543px;width:39px;"><span style="left:20px;top:5px;width:10px;height:4px;background:linear-gradient(#8fb6da,#6a98c4);border:1px solid #44739f"></span></div>
<div class="cell" style="left:236px;top:543px;width:90px;letter-spacing:-.12px">000000000048</div>
<div class="cell" style="left:326px;top:543px;width:230px;padding-left:3px">Прогноз зарплаты</div>
<div class="cell" style="left:556px;top:543px;width:24px;">Про</div>
<div class="cell" style="left:197px;top:562px;width:39px;"><span style="left:20px;top:5px;width:10px;height:4px;background:linear-gradient(#8fb6da,#6a98c4);border:1px solid #44739f"></span></div>
<div class="cell" style="left:236px;top:562px;width:90px;letter-spacing:-.12px">000000000094</div>
<div class="cell" style="left:326px;top:562px;width:230px;letter-spacing:0.10px;padding-left:3px">Расшифровка ГИБДД</div>
<div class="cell" style="left:556px;top:562px;width:24px;">Про</div>
<div class="cell" style="left:197px;top:581px;width:39px;"><span style="left:20px;top:5px;width:10px;height:4px;background:linear-gradient(#8fb6da,#6a98c4);border:1px solid #44739f"></span></div>
<div class="cell" style="left:236px;top:581px;width:90px;letter-spacing:-.12px">000000000046</div>
<div class="cell sel" style="left:326px;top:581px;width:230px;padding-left:3px">Сообщение с приглашением установить м<i>...</i></div>
<div class="cell" style="left:556px;top:581px;width:24px;">Про</div>
<div class="cell" style="left:197px;top:600px;width:39px;"><span style="left:20px;top:5px;width:10px;height:4px;background:linear-gradient(#8fb6da,#6a98c4);border:1px solid #44739f"></span></div>
<div class="cell" style="left:236px;top:600px;width:90px;letter-spacing:-.12px">000000000035</div>
<div class="cell" style="left:326px;top:600px;width:230px;letter-spacing:-0.20px;padding-left:3px">Средний чек</div>
<div class="cell" style="left:556px;top:600px;width:24px;">Про</div>
<div class="cell" style="left:197px;top:619px;width:39px;"><span style="left:20px;top:5px;width:10px;height:4px;background:linear-gradient(#8fb6da,#6a98c4);border:1px solid #44739f"></span></div>
<div class="cell" style="left:236px;top:619px;width:90px;letter-spacing:-.12px">000000000040</div>
<div class="cell" style="left:326px;top:619px;width:230px;letter-spacing:-0.14px;padding-left:3px">Средний чек (повторных)</div>
<div class="cell" style="left:556px;top:619px;width:24px;">Про</div>
<div class="cell" style="left:197px;top:638px;width:39px;"><span style="left:20px;top:5px;width:10px;height:4px;background:linear-gradient(#8fb6da,#6a98c4);border:1px solid #44739f"></span></div>
<div class="cell" style="left:236px;top:638px;width:90px;letter-spacing:-.12px">000000000036</div>
<div class="cell" style="left:326px;top:638px;width:230px;letter-spacing:-0.12px;padding-left:3px">Средний чек повторных</div>
<div class="cell" style="left:556px;top:638px;width:24px;">Про</div>
<div class="cell" style="left:197px;top:657px;width:39px;"><span style="left:20px;top:5px;width:10px;height:4px;background:linear-gradient(#8fb6da,#6a98c4);border:1px solid #44739f"></span></div>
<div class="cell" style="left:236px;top:657px;width:90px;letter-spacing:-.12px">000000000016</div>
<div class="cell" style="left:326px;top:657px;width:230px;letter-spacing:-0.21px;padding-left:3px">Ссылка на telegram-бота</div>
<div class="cell" style="left:556px;top:657px;width:24px;">Про</div>
<div class="cell" style="left:197px;top:676px;width:39px;"><span style="left:20px;top:5px;width:10px;height:4px;background:linear-gradient(#8fb6da,#6a98c4);border:1px solid #44739f"></span></div>
<div class="cell" style="left:236px;top:676px;width:90px;letter-spacing:-.12px">ЦБ0000000017</div>
<div class="cell" style="left:326px;top:676px;width:230px;letter-spacing:-0.17px;padding-left:3px">Старт WtatsApp диалог</div>
<div class="cell" style="left:556px;top:676px;width:24px;">Про</div>
<div class="cell" style="left:197px;top:695px;width:39px;"><span style="left:20px;top:5px;width:10px;height:4px;background:linear-gradient(#8fb6da,#6a98c4);border:1px solid #44739f"></span></div>
<div class="cell" style="left:236px;top:695px;width:90px;letter-spacing:-.12px">000000000017</div>
<div class="cell" style="left:326px;top:695px;width:230px;padding-left:3px">Тест сообщения по заявке</div>
<div class="cell" style="left:556px;top:695px;width:24px;">Про</div>
<div class="cell" style="left:197px;top:714px;width:39px;"><span style="left:20px;top:5px;width:10px;height:4px;background:linear-gradient(#8fb6da,#6a98c4);border:1px solid #44739f"></span></div>
<div class="cell" style="left:236px;top:714px;width:90px;letter-spacing:-.12px">000000000014</div>
<div class="cell" style="left:326px;top:714px;width:230px;padding-left:3px">Уведомления о выполненнии задач "Подб<i>...</i></div>
<div class="cell" style="left:556px;top:714px;width:24px;">Про</div>
<div class="cell" style="left:197px;top:733px;width:39px;height:7px;border-bottom:none;"><span style="left:20px;top:5px;width:10px;height:4px;background:linear-gradient(#8fb6da,#6a98c4);border:1px solid #44739f"></span></div>
<div class="cell" style="left:236px;top:733px;width:90px;height:7px;border-bottom:none;letter-spacing:-.12px">000000000013</div>
<div class="cell" style="left:326px;top:733px;width:230px;height:7px;border-bottom:none;padding-left:3px">Уведомления</div>
<div class="cell" style="left:556px;top:733px;width:24px;height:7px;border-bottom:none;">Про</div>
<div class="" style="left:326px;top:581px;width:229px;height:18px;border:1px solid #000"></div>
<div class="" style="left:326px;top:581px;width:229px;height:18px;border:1px dotted #fff"></div>
<div class="" style="left:580px;top:467px;width:16px;height:273px;background:#f8f6ec"></div>
<div class="" style="left:579px;top:585px;width:17px;height:16px;background:linear-gradient(90deg,#fcfaec,#ebe5c4);border:1px solid #cfc8a6"></div>
<svg style="position:absolute;left:585px;top:591px" width="4" height="4" viewBox="0 0 4 4"><circle cx="2" cy="2" r="1.3" fill="none" stroke="#bdb89c" stroke-width=".8"/></svg>
<div class="" style="left:579px;top:719px;width:17px;height:22px;background:linear-gradient(90deg,#fcfaec,#ebe5c4);border:1px solid #cfc8a6"></div>
<svg style="position:absolute;left:583px;top:727px" width="9" height="8"><path d="M0.5 1H8.5L4.5 7Z" fill="#8e8e8e"/></svg>
<div class="" style="left:197px;top:740px;width:383px;height:16px;background:#f8f6ec;border-top:1px solid #cfc8a6"></div>
<div class="" style="left:196px;top:740px;width:21px;height:17px;background:linear-gradient(#fcfaec,#ebe5c4);border:1px solid #cfc8a6"></div>
<svg style="position:absolute;left:203px;top:744px" width="7" height="9"><path d="M6 0.5V8.5L1 4.5Z" fill="#c4c1ae"/></svg>
<div class="" style="left:216px;top:740px;width:310px;height:17px;background:linear-gradient(#fcfaec,#ebe5c4);border:1px solid #cfc8a6"></div>
<svg style="position:absolute;left:369px;top:746px" width="4" height="4" viewBox="0 0 4 4"><circle cx="2" cy="2" r="1.3" fill="none" stroke="#bdb89c" stroke-width=".8"/></svg>
<div class="" style="left:558px;top:740px;width:22px;height:17px;background:linear-gradient(#fcfaec,#ebe5c4);border:1px solid #cfc8a6"></div>
<svg style="position:absolute;left:566px;top:744px" width="7" height="9"><path d="M1 0.5V8.5L6 4.5Z" fill="#8e8e8e"/></svg>
<div class="" style="left:580px;top:741px;width:16px;height:15px;background:#f8f6ec;border-left:1px solid #cfc8a6"></div>
<svg style="position:absolute;left:0;top:0;filter:drop-shadow(1px 1px 1px rgba(0,0,0,.35))" width="1065" height="827" viewBox="0 0 1065 827"><g fill="none" stroke="#f20f18" stroke-width="3"><path d="M195 579.5H579" stroke-dasharray="9 3.8"/><path d="M579 600.5H195" stroke-dasharray="9 3.8"/><path d="M196.5 578V602" stroke-dasharray="12 3 9"/><path d="M577.5 578V602" stroke-dasharray="8.3 3.7 12"/></g></svg>
<div class="" style="left:4px;top:760px;width:597px;height:26px;background:#f3f3f3;border-top:1px solid #cfc8a6"></div>
<span class="t " style="left:9px;top:767px;color:#4a62c8">Сообщение с приглашением установит<i>...</i></span>
<span class="t " style="left:237px;top:767px;color:#3a3426">Отправить на модерацию</span>
<svg style="position:absolute;left:376px;top:766px" width="16" height="15" viewBox="0 0 16 15"><rect x="1.5" y="1.5" width="7" height="11" fill="#fff" stroke="#5f7fa8" stroke-width="1"/><path d="M3 4H7M3 6.5H7M3 9H7" stroke="#5f7fa8" stroke-width="1"/><path d="M7.5 4.5V13.5L9.8 11.6L11.4 14.8L12.8 14.1L11.3 11L14 10.8Z" fill="#fff" stroke="#222" stroke-width=".9"/></svg>
<span class="t " style="left:395px;top:767px;font-weight:bold;color:#3a2a10">Выбрать</span>
<div class="sep" style="left:451px;top:764px;width:1px;height:19px;"></div>
<svg style="position:absolute;left:458px;top:765px" width="16" height="16" viewBox="0 0 16 16"><rect x="1" y="1" width="9" height="8" fill="#ddd" stroke="#bbb" stroke-width="1"/><path d="M2.5 3.5H8.5M2.5 5.5H8.5M2.5 7.5H8.5" stroke="#bbb"/><rect x="1" y="9" width="14" height="5" fill="#d0d0d0" stroke="#b5b5b5" stroke-width="1"/></svg>
<span class="t " style="left:477px;top:767px;color:#a5a5a5">Печать</span>
<svg style="position:absolute;left:514px;top:771px" width="6" height="3"><path d="M0 0H6L3 3Z" fill="#a5a5a5"/></svg>
<div class="sep" style="left:525px;top:764px;width:1px;height:19px;"></div>
<svg style="position:absolute;left:535px;top:768px" width="10" height="10" viewBox="0 0 10 10"><path d="M1.5 1.5L8.5 8.5M8.5 1.5L1.5 8.5" stroke="#3a78c2" stroke-width="2.4" stroke-linecap="round"/></svg>
<span class="t " style="left:550px;top:767px;color:#3a3426">Закрыть</span>
<svg style="position:absolute;left:0;top:0;filter:drop-shadow(1px 2px 1.5px rgba(0,0,0,.3))" width="1065" height="827" viewBox="0 0 1065 827"><path d="M678.5 387C668 362 615 350 585 381" fill="none" stroke="#f0141e" stroke-width="3.2" stroke-linecap="round"/><circle cx="678.5" cy="387.3" r="4.4" fill="#f0141e"/><path d="M568.8 399.8L578.5 373.8L583.8 382.6L590 382.4Z" fill="#f0141e"/></svg>
</body></html>
